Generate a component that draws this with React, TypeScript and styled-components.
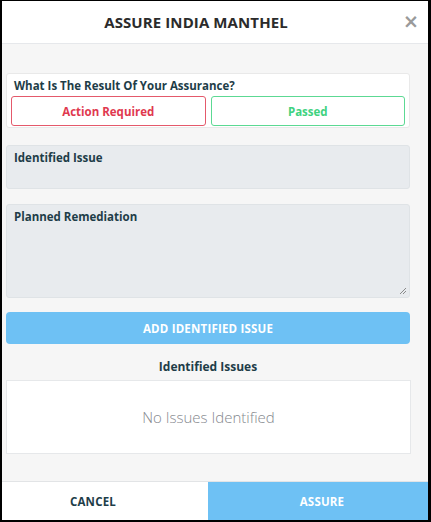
import React from 'react';
import styled, { createGlobalStyle } from 'styled-components';

const GlobalStyle = createGlobalStyle`
  html, body {
    margin: 0;
    padding: 0;
    background: #ffffff;
  }
  body {
    font-family: "Open Sans", "Liberation Sans", sans-serif;
  }
  * {
    box-sizing: border-box;
  }
`

const Frame = styled.div`
  width: 431px;
  height: 522px;
  display: flex;
  flex-direction: column;
  border-style: solid;
  border-color: #000;
  border-width: 1px 3px 2px 2px;
  background: #fff;
  overflow: hidden;
`

const Header = styled.header`
  height: 43px;
  display: flex;
  align-items: center;
  border-bottom: 1px solid #e6e8eb;
  background: #fff;
  flex-shrink: 0;
`

const Title = styled.h1`
  flex: 1;
  margin: 0;
  text-align: center;
  font-size: 15px;
  font-weight: 700;
  color: #2b2b2b;
  letter-spacing: 0.1px;
`

const Close = styled.button`
  width: 38px;
  height: 42px;
  border: none;
  background: none;
  padding: 0 0 2px 4px;
  color: #9a9a9a;
  font-size: 19px;
  font-weight: 700;
  line-height: 1;
  font-family: "DejaVu Sans", sans-serif;
  display: flex;
  align-items: center;
  justify-content: center;
`

const Body = styled.main`
  flex: 1;
  background: #f6f6f6;
  padding: 29px 18px 0 4px;
  display: flex;
  flex-direction: column;
`

const Card = styled.section`
  background: #fff;
  border: 1px solid #e9e9e9;
  border-radius: 3px;
  padding: 4px 4px 1px 4px;
`

const Label = styled.div`
  font-size: 11.5px;
  font-weight: 700;
  color: #1e3d48;
  line-height: 16px;
  padding-left: 3px;
`

const Choices = styled.div`
  display: grid;
  grid-template-columns: 1fr 1fr;
  gap: 5px;
  margin-top: 2px;
`

const Choice = styled.button<{ $tone: string; $edge: string }>`
  height: 30px;
  background: #fff;
  border: 1px solid ${p => p.$edge};
  border-radius: 3px;
  color: ${p => p.$tone};
  font-family: inherit;
  font-size: 11.5px;
  font-weight: 700;
`

const Field = styled.div<{ $h: number; $gap: number }>`
  position: relative;
  height: ${p => p.$h}px;
  margin-top: ${p => p.$gap}px;
  background: #e8ebee;
  border: 1px solid #dfe3e6;
  border-radius: 3px;
  padding: 4px 4px;
`

const Grip = styled.svg`
  position: absolute;
  right: 2px;
  bottom: 2px;
`

const AddButton = styled.button`
  margin-top: 14px;
  height: 32px;
  border: none;
  border-radius: 4px;
  background: #6ec1f4;
  color: #fff;
  font-family: inherit;
  font-size: 11.5px;
  font-weight: 700;
  letter-spacing: 0.2px;
`

const SectionTitle = styled.div`
  margin-top: 15px;
  text-align: center;
  font-size: 12px;
  font-weight: 700;
  color: #1e3d48;
  line-height: 16px;
`

const EmptyBox = styled.div`
  margin-top: 5px;
  margin-right: -1px;
  height: 74px;
  background: #fff;
  border: 1px solid #e6e8ea;
  display: flex;
  align-items: center;
  justify-content: center;
  font-size: 15px;
  font-weight: 300;
  color: #85888e;
`

const Footer = styled.footer`
  height: 39px;
  flex-shrink: 0;
  display: grid;
  grid-template-columns: 206px 1fr;
  border-top: 1px solid #e2e4e6;
`

const FootButton = styled.button<{ $primary?: boolean }>`
  border: none;
  background: ${p => (p.$primary ? '#6ec1f4' : '#fff')};
  color: ${p => (p.$primary ? '#fff' : '#1e3d48')};
  padding: ${p => (p.$primary ? '0 0 0 8px' : '0 24px 0 0')};
  font-family: inherit;
  font-size: 11.5px;
  font-weight: 700;
  letter-spacing: 0.2px;
`

export default function App() {
  return (
    <>
      <GlobalStyle />
      <Frame>
        <Header>
          <Title>ASSURE INDIA MANTHEL</Title>
          <Close aria-label="Close">×</Close>
        </Header>
        <Body>
          <Card>
            <Label>What Is The Result Of Your Assurance?</Label>
            <Choices>
              <Choice $tone="#e0394f" $edge="#e4596b">Action Required</Choice>
              <Choice $tone="#3fd27f" $edge="#5cd993">Passed</Choice>
            </Choices>
          </Card>
          <Field $h={44} $gap={17}>
            <Label>Identified Issue</Label>
          </Field>
          <Field $h={94} $gap={15}>
            <Label>Planned Remediation</Label>
            <Grip width="8" height="8" viewBox="0 0 8 8">
              <path d="M1 7 L7 1 M4 7 L7 4" stroke="#8a8a8a" strokeWidth="1" fill="none" />
            </Grip>
          </Field>
          <AddButton>ADD IDENTIFIED ISSUE</AddButton>
          <SectionTitle>Identified Issues</SectionTitle>
          <EmptyBox>No Issues Identified</EmptyBox>
        </Body>
        <Footer>
          <FootButton>CANCEL</FootButton>
          <FootButton $primary>ASSURE</FootButton>
        </Footer>
      </Frame>
    </>
  );
}
